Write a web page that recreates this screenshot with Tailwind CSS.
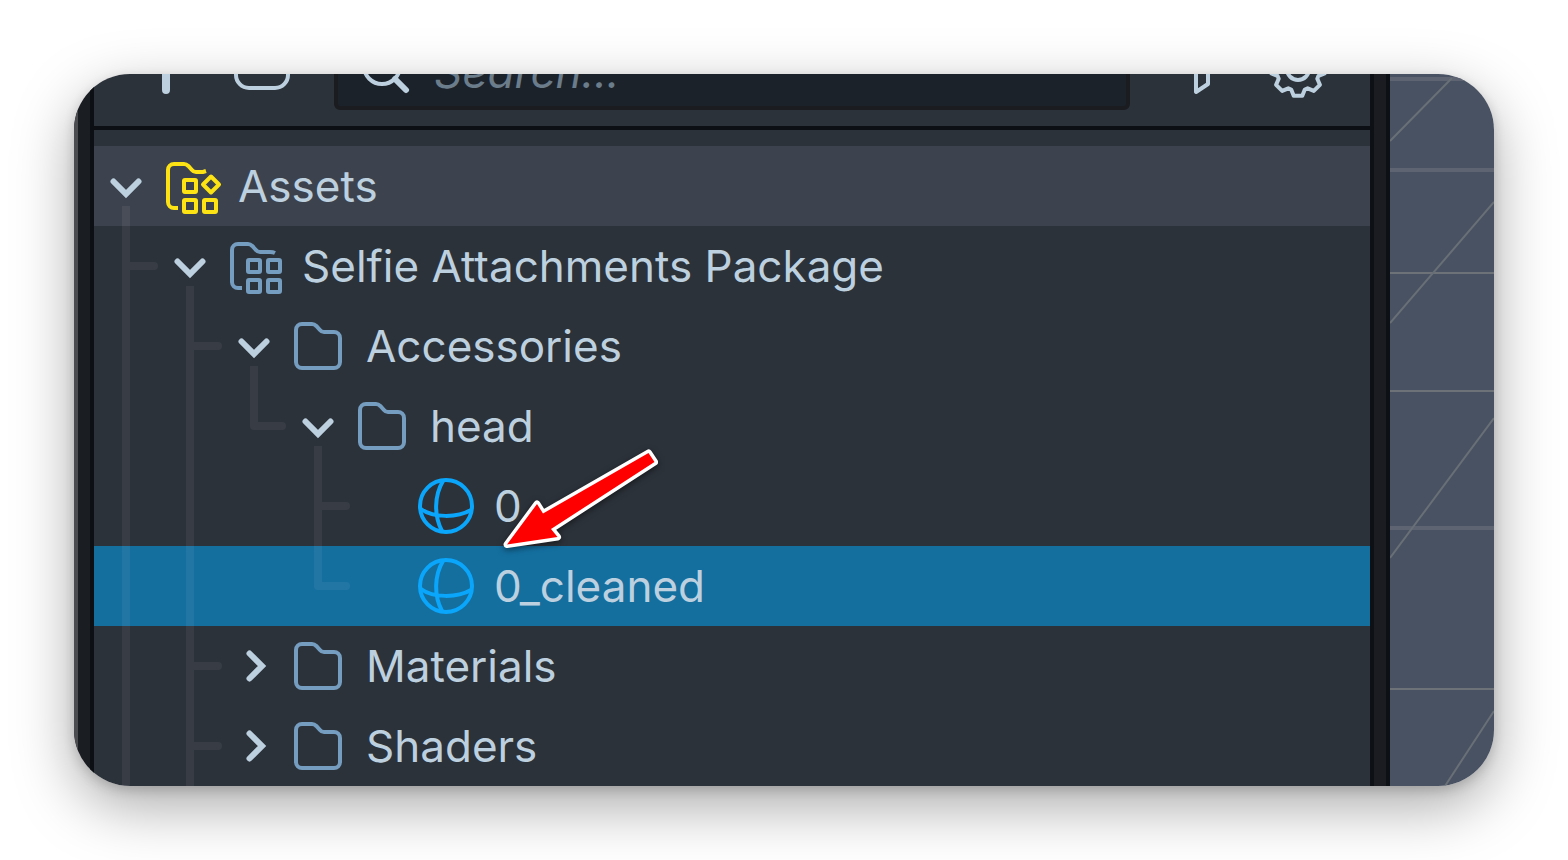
<!DOCTYPE html>
<html lang="en">
<head>
  <meta charset="UTF-8">
  <meta name="viewport" content="width=device-width, initial-scale=1.0">
  <title>Asset Browser</title>
  <script src="https://cdn.jsdelivr.net/npm/@tailwindcss/browser@4"></script>
</head>
<body class="bg-white p-[74px] font-['Inter',sans-serif] text-[#bdd0df]">

  <!-- Shared icons -->
  <svg class="hidden" aria-hidden="true">
    <symbol id="chevron-down" viewBox="0 0 32 32">
      <path d="M3.500 11.500 16 24 28.500 11.500" fill="none" stroke="currentColor" stroke-width="6" stroke-linecap="round" />
    </symbol>
    <symbol id="chevron-right" viewBox="0 0 32 32">
      <path d="M11.500 3.500 24 16 11.500 28.500" fill="none" stroke="currentColor" stroke-width="6" stroke-linecap="round" />
    </symbol>
    <symbol id="folder" viewBox="0 0 48 48">
      <path d="M2 8a6 6 0 0 1 6-6h10c2 0 3 .7 4.300 2l3.400 3.700C27 9.300 28.300 10 30 10h10a6 6 0 0 1 6 6v24a6 6 0 0 1-6 6H8a6 6 0 0 1-6-6z" fill="none" stroke="currentColor" stroke-width="4" />
    </symbol>
    <symbol id="globe" viewBox="0 0 56 56">
      <g fill="none" stroke="currentColor" stroke-width="4">
        <circle cx="28" cy="28" r="26" />
        <path d="M25 3C16 18 16 38 24 53M3 31c12 9 36 9 50 1" />
      </g>
    </symbol>
  </svg>

  <main class="relative flex rounded-[56px] shadow-[0_20px_60px_rgba(0,0,0,0.34),0_4px_12px_rgba(0,0,0,0.16)]">
    <div class="flex min-w-0 flex-1 overflow-hidden rounded-[56px]">
      <div class="w-5 shrink-0 border-r-4 border-l-4 border-r-[#0c0f13] border-l-[#4b4c50] bg-[#1a1d22]"></div>

      <section class="min-w-0 flex-1 bg-[#2c323a]">
        <!-- Toolbar, scrolled partly out of view -->
        <div class="flex h-14 items-end gap-10 overflow-hidden border-b-4 border-[#0c1014] px-11 pb-4">
          <button type="button" aria-label="Add" class="flex h-[76px] shrink-0 items-center">
            <svg class="size-14" viewBox="0 0 56 56" fill="none" stroke="currentColor" stroke-width="8" stroke-linecap="round"><path d="M28 6v40M8 26h40" /></svg>
          </button>
          <button type="button" aria-label="New folder" class="flex h-[76px] shrink-0 items-center">
            <svg class="size-14" viewBox="0 0 56 56" fill="none" stroke="currentColor" stroke-width="4"><rect x="2" y="4" width="52" height="40" rx="13" /></svg>
          </button>
          <label class="mx-1 flex h-[76px] min-w-0 flex-1 items-center gap-6 rounded-md border-4 border-[#1a1c20] bg-[#1c222a] pl-6">
            <svg class="size-12 shrink-0" viewBox="0 0 48 48" fill="none" stroke="currentColor" stroke-linecap="round" aria-hidden="true">
              <circle cx="20" cy="18" r="18" stroke-width="4" />
              <path d="m33 31 11 11" stroke-width="6" />
            </svg>
            <input type="search" placeholder="Search..." aria-label="Search" class="min-w-0 flex-1 bg-transparent text-[44px] leading-[52px] italic outline-none placeholder:text-[#6b7c8b]">
          </label>
          <button type="button" aria-label="Filter" class="flex h-[76px] shrink-0 items-center">
            <svg class="size-14" viewBox="0 0 56 56" fill="none" stroke="currentColor" stroke-width="4" stroke-linejoin="round"><path d="M4 4h48L34 25v15l-12 8V25z" /></svg>
          </button>
          <button type="button" aria-label="Settings" class="flex h-[76px] shrink-0 items-center">
            <svg class="size-14 overflow-visible" viewBox="0 0 56 56" fill="none" stroke="currentColor" stroke-width="4" stroke-linejoin="round">
              <circle cx="28" cy="25" r="11" />
              <path transform="translate(28 25)" d="M-6.800-20.500-4.300-26.700H4.300L6.800-20.500 9.700-19.300 15.800-21.900 21.900-15.800 19.300-9.700 20.500-6.800 26.700-4.300V4.300L20.500 6.800 19.300 9.700 21.900 15.800 15.800 21.900 9.700 19.300 6.800 20.500 4.300 26.700H-4.300L-6.800 20.500-9.700 19.300-15.800 21.900-21.900 15.800-19.300 9.700-20.500 6.800-26.700 4.300V-4.300L-20.500-6.800-19.300-9.700-21.900-15.800-15.800-21.900-9.700-19.300z" />
            </svg>
          </button>
        </div>

        <!-- Asset tree -->
        <div class="relative pt-4">
          <ul class="text-[44px] leading-[52px] whitespace-nowrap">
            <li class="flex h-20 items-center gap-6 bg-[#3d434e] pl-4">
              <button type="button" aria-label="Collapse Assets"><svg class="size-8"><use href="#chevron-down" /></svg></button>
              <svg class="size-12 shrink-0 overflow-visible text-[#fde314]" viewBox="0 0 48 48" fill="none" stroke="currentColor" stroke-width="4">
                <path d="M12 46H8a6 6 0 0 1-6-6V8a6 6 0 0 1 6-6h10c2 0 3 .7 4.300 2l3.400 3.700C27 9.300 28.300 10 30 10h7l3-1" />
                <rect x="18" y="18" width="12" height="12" rx="1" />
                <rect x="18" y="38" width="12" height="12" rx="1" />
                <rect x="38" y="38" width="12" height="12" rx="1" />
                <path d="m45 14.500 8 8-8 8-8-8z" stroke-linejoin="round" />
              </svg>
              <span>Assets</span>
            </li>
            <li class="flex h-20 items-center gap-6 pl-20">
              <button type="button" aria-label="Collapse Selfie Attachments Package"><svg class="size-8"><use href="#chevron-down" /></svg></button>
              <svg class="size-12 shrink-0 overflow-visible text-[#759dbf]" viewBox="0 0 48 48" fill="none" stroke="currentColor" stroke-width="4">
                <path d="M12 46H8a6 6 0 0 1-6-6V8a6 6 0 0 1 6-6h10c2 0 3 .7 4.300 2l3.400 3.700C27 9.300 28.300 10 30 10h10q3 0 5 1" />
                <rect x="18" y="18" width="12" height="12" rx="1" />
                <rect x="38" y="18" width="12" height="12" rx="1" />
                <rect x="18" y="38" width="12" height="12" rx="1" />
                <rect x="38" y="38" width="12" height="12" rx="1" />
              </svg>
              <span>Selfie Attachments Package</span>
            </li>
            <li class="flex h-20 items-center gap-6 pl-36">
              <button type="button" aria-label="Collapse Accessories"><svg class="size-8"><use href="#chevron-down" /></svg></button>
              <svg class="size-12 shrink-0 text-[#759dbf]"><use href="#folder" /></svg>
              <span>Accessories</span>
            </li>
            <li class="flex h-20 items-center gap-6 pl-52">
              <button type="button" aria-label="Collapse head"><svg class="size-8"><use href="#chevron-down" /></svg></button>
              <svg class="size-12 shrink-0 text-[#759dbf]"><use href="#folder" /></svg>
              <span>head</span>
            </li>
            <li class="flex h-20 items-center gap-5 pl-[324px]">
              <svg class="size-14 shrink-0 text-[#0aa6fc]"><use href="#globe" /></svg>
              <span>0</span>
            </li>
            <li class="flex h-20 items-center gap-5 bg-[#146f9f] pl-[324px]">
              <svg class="size-14 shrink-0 text-[#0aa6fc]"><use href="#globe" /></svg>
              <span>0_cleaned</span>
            </li>
            <li class="flex h-20 items-center gap-6 pl-36">
              <button type="button" aria-label="Expand Materials"><svg class="size-8"><use href="#chevron-right" /></svg></button>
              <svg class="size-12 shrink-0 text-[#759dbf]"><use href="#folder" /></svg>
              <span>Materials</span>
            </li>
            <li class="flex h-20 items-center gap-6 pl-36">
              <button type="button" aria-label="Expand Shaders"><svg class="size-8"><use href="#chevron-right" /></svg></button>
              <svg class="size-12 shrink-0 text-[#759dbf]"><use href="#folder" /></svg>
              <span>Shaders</span>
            </li>
          </ul>

          <!-- Indent guides -->
          <svg class="pointer-events-none absolute top-0 left-0 h-full w-72" viewBox="0 0 288 656" fill="none" stroke="#f5e8f0" stroke-width="8" stroke-linejoin="round" opacity="0.06" aria-hidden="true">
            <path d="M32 76v580M96 156v500M160 236v60h8M224 316v140h8" />
            <path d="M32 136h28M96 216h28M164 296h24M224 376h28M228 456h24M96 536h28M96 616h28" stroke-linecap="round" />
          </svg>
        </div>
      </section>

      <div class="w-5 shrink-0 border-x-4 border-[#0d1014] bg-[#1a1c22]"></div>

      <!-- Scene viewport -->
      <div class="w-[104px] shrink-0 bg-[#495262]">
        <svg class="w-full" viewBox="0 0 104 712" fill="none" stroke="#6c7278" stroke-width="2" aria-hidden="true">
          <path d="M0 199h104M0 317h104M0 615h104" />
          <path d="M0 5h104M0 96h104M0 454h104" stroke="#5e6471" stroke-width="4" />
          <path d="m0 67 62-63M0 249l104-121M0 484l104-140M55 712l49-75" stroke="#686f76" />
        </svg>
      </div>
    </div>

    <!-- Callout arrow -->
    <svg class="pointer-events-none absolute top-[366px] left-[420px] h-[120px] w-[176px] drop-shadow-[0_2px_3px_rgba(0,0,0,0.5)]" viewBox="0 0 176 120" fill="#fe0000" stroke="#fff" stroke-width="7" stroke-linejoin="round" paint-order="stroke" aria-hidden="true">
      <path d="m13 104.500 30-40.500 6 9.500L154.500 13l6 9L57 89l6.500 8z" />
    </svg>
  </main>

</body>
</html>
